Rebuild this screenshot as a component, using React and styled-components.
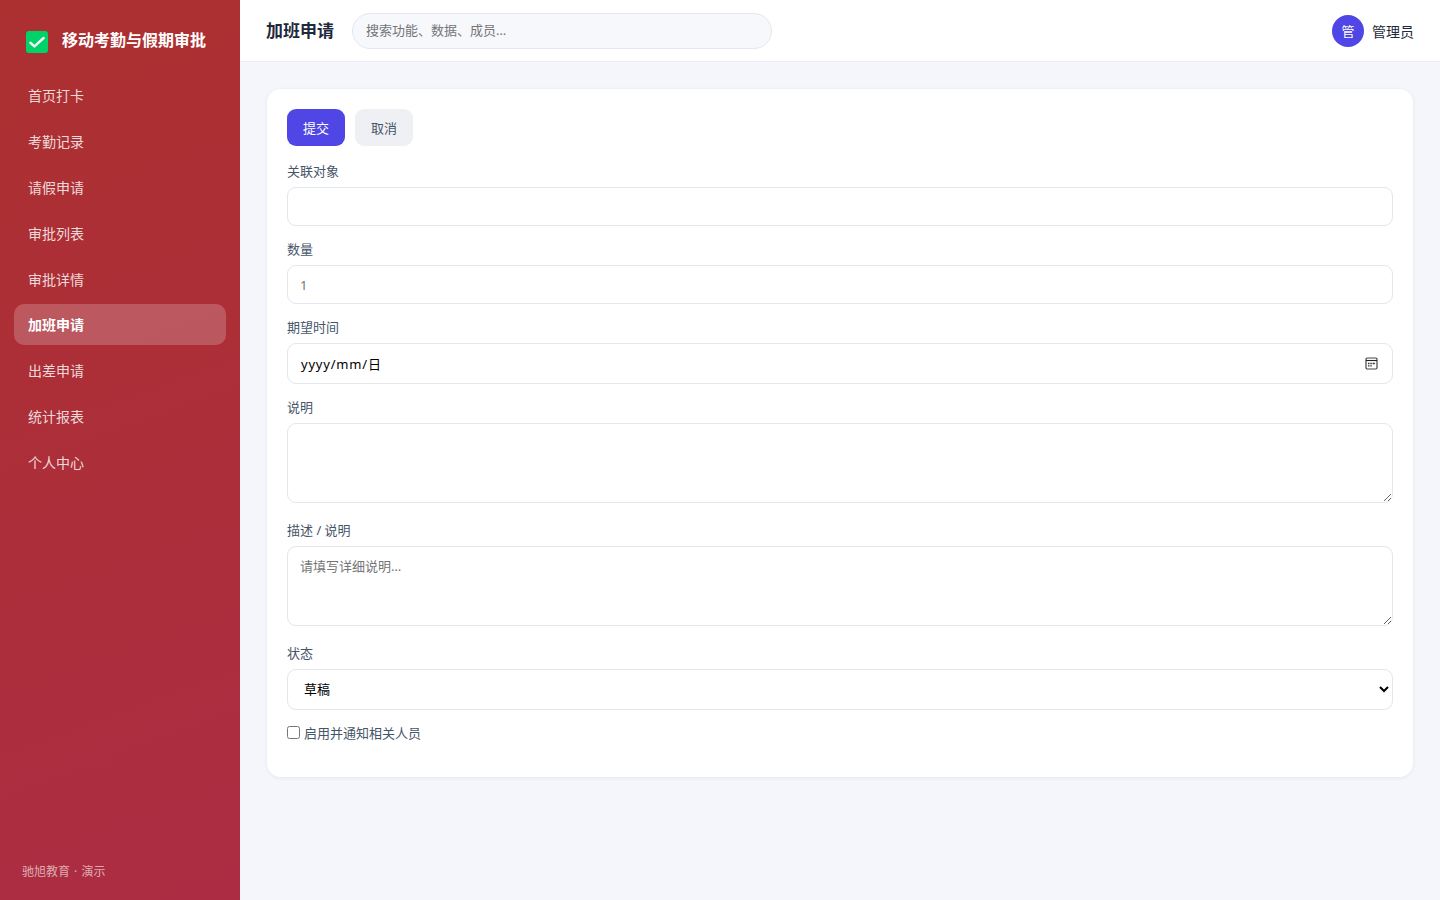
import React, { useState } from 'react'
import styled, { createGlobalStyle } from 'styled-components'

const navItems = [
  '首页打卡',
  '考勤记录',
  '请假申请',
  '审批列表',
  '审批详情',
  '加班申请',
  '出差申请',
  '统计报表',
  '个人中心',
]

export default function App() {
  const [active, setActive] = useState('加班申请')
  const [notify, setNotify] = useState(false)

  return (
    <>
      <GlobalStyle />
      <Layout>
        <Sidebar>
          <Brand>
            <svg width="22" height="22" viewBox="0 0 22 22">
              <rect width="22" height="22" rx="3" fill="#00d26a" />
              <path d="M4.4 11.8 8.4 15.4 17.6 7" fill="none" stroke="#f4f4f4" strokeWidth="2.5" strokeLinecap="round" strokeLinejoin="round" />
            </svg>
            <span>移动考勤与假期审批</span>
          </Brand>
          <Nav>
            {navItems.map((item) => (
              <NavItem key={item} $active={item === active} onClick={() => setActive(item)}>
                {item}
              </NavItem>
            ))}
          </Nav>
          <SideFooter>驰旭教育 · 演示</SideFooter>
        </Sidebar>
        <Main>
          <Topbar>
            <h1>加班申请</h1>
            <Search placeholder="搜索功能、数据、成员…" />
            <User>
              <Avatar>管</Avatar>
              <span>管理员</span>
            </User>
          </Topbar>
          <Card>
            <Actions>
              <Button $primary>提交</Button>
              <Button>取消</Button>
            </Actions>
            <Field>
              <label>关联对象</label>
              <Input />
            </Field>
            <Field>
              <label>数量</label>
              <Input placeholder="1" />
            </Field>
            <Field>
              <label>期望时间</label>
              <DateBox>
                <span>yyyy/mm/日</span>
                <svg width="13" height="13" viewBox="0 0 13 13">
                  <rect x="1" y="1" width="11" height="11" rx="1.2" fill="none" stroke="#444" strokeWidth="1.2" />
                  <path d="M1 3.5h11" stroke="#222" strokeWidth="1.1" />
                  <path d="M3 6.5h1.5M5.3 6.5h1.5M7.6 6.5h2.2M3 8.8h1.5M5.3 8.8h1.5" stroke="#333" strokeWidth="1.3" />
                </svg>
              </DateBox>
            </Field>
            <Field $area>
              <label>说明</label>
              <Textarea />
            </Field>
            <Field $area>
              <label>描述 / 说明</label>
              <Textarea placeholder="请填写详细说明…" />
            </Field>
            <Field>
              <label>状态</label>
              <Select defaultValue="草稿">
                <option>草稿</option>
                <option>已提交</option>
              </Select>
            </Field>
            <CheckLine>
              <input type="checkbox" checked={notify} onChange={(e) => setNotify(e.target.checked)} />
              <span>启用并通知相关人员</span>
            </CheckLine>
          </Card>
        </Main>
      </Layout>
    </>
  )
}

const GlobalStyle = createGlobalStyle`
* {
  box-sizing: border-box;
}
body {
  margin: 0;
  background: #f5f6fb;
  color: #1e293b;
  font-family: "Noto Sans", "Noto Sans CJK SC", sans-serif;
}
input, button, textarea, select {
  font-family: inherit;
}
`

const Layout = styled.div`
  display: flex;
  height: 100vh;
  overflow: hidden;
`

const Sidebar = styled.aside`
  width: 240px;
  flex-shrink: 0;
  display: flex;
  flex-direction: column;
  padding: 22px 14px 18px;
  background: linear-gradient(160deg, #ac3030, #ac2d43);
`

const Brand = styled.div`
  display: flex;
  align-items: center;
  gap: 14px;
  height: 36px;
  padding: 0 12px;
  color: #fff;
  font-size: 16px;
  font-weight: 700;
  line-height: 36px;
  white-space: nowrap;
  svg {
    margin-top: 4px;
    flex-shrink: 0;
  }
`

const Nav = styled.nav`
  display: flex;
  flex-direction: column;
  gap: 5px;
  margin-top: 17.35px;
`

const NavItem = styled.a`
  height: 40.8px;
  padding: 0 14px;
  border-radius: 10px;
  font-size: 14px;
  line-height: 41px;
  cursor: pointer;
  color: ${({ $active }) => ($active ? '#fff' : 'rgba(255, 255, 255, 0.82)')};
  font-weight: ${({ $active }) => ($active ? 700 : 400)};
  background: ${({ $active }) => ($active ? 'rgba(255, 255, 255, 0.2)' : 'transparent')};
`

const SideFooter = styled.div`
  margin-top: auto;
  padding: 0 8px;
  font-size: 12px;
  line-height: 20px;
  word-spacing: 1px;
  color: rgba(255, 255, 255, 0.6);
`

const Main = styled.main`
  flex: 1;
  min-width: 0;
`

const Topbar = styled.header`
  display: flex;
  align-items: center;
  height: 62px;
  padding: 0 26px;
  background: #fff;
  border-bottom: 1px solid #eceef4;
  h1 {
    margin: 0 18px 0 0;
    padding-top: 1px;
    font-size: 17px;
    font-weight: 700;
    line-height: 24px;
  }
`

const Search = styled.input`
  width: 420px;
  height: 36px;
  padding: 0 13px 1px;
  border: 1px solid #e5e7ef;
  border-radius: 18px;
  background: #f7f8fc;
  font-size: 13px;
  outline: none;
  &::placeholder {
    color: #757575;
  }
`

const User = styled.div`
  display: flex;
  align-items: center;
  gap: 8px;
  margin-left: auto;
  font-size: 14px;
`

const Avatar = styled.div`
  width: 32px;
  height: 32px;
  border-radius: 50%;
  background: #4f46e5;
  color: #fff;
  font-size: 13px;
  line-height: 32px;
  text-align: center;
`

const Card = styled.section`
  height: 688px;
  margin: 27px 27px 0;
  padding: 20px;
  border-radius: 14px;
  background: #fff;
  box-shadow: 0 1px 4px rgba(30, 41, 80, 0.07);
`

const Actions = styled.div`
  display: flex;
  gap: 10px;
  margin-bottom: 15px;
`

const Button = styled.button`
  height: 37px;
  padding: 0 16px 1px;
  border: none;
  border-radius: 9px;
  font-size: 13px;
  cursor: pointer;
  color: ${({ $primary }) => ($primary ? '#fff' : '#475569')};
  background: ${({ $primary }) => ($primary ? '#4f46e5' : '#eef0f4')};
`

const Field = styled.div`
  margin-bottom: ${({ $area }) => ($area ? '17px' : '13px')};
  label {
    display: block;
    margin-bottom: 6px;
    font-size: 13px;
    line-height: 20px;
    color: #475569;
  }
`

const Input = styled.input`
  display: block;
  width: 100%;
  height: 39px;
  padding: 0 12px;
  border: 1px solid #e4e6ee;
  border-radius: 9px;
  background: #fff;
  font-size: 13px;
  outline: none;
  &::placeholder {
    color: #757575;
  }
`

const DateBox = styled.div`
  display: flex;
  align-items: center;
  justify-content: space-between;
  height: 41px;
  padding: 0 14px 0 13px;
  border: 1px solid #e4e6ee;
  border-radius: 9px;
  color: #000;
  font-size: 13px;
  letter-spacing: 0.8px;
`

const Textarea = styled.textarea`
  display: block;
  width: 100%;
  height: 80px;
  padding: 10px 12px;
  border: 1px solid #e4e6ee;
  border-radius: 9px;
  background: #fff;
  font-size: 13px;
  line-height: 19px;
  resize: vertical;
  outline: none;
  &::placeholder {
    color: #757575;
  }
`

const Select = styled.select`
  display: block;
  width: 100%;
  height: 41px;
  padding: 0 0 1px 12px;
  border: 1px solid #e4e6ee;
  border-radius: 9px;
  background: #fff;
  color: #000;
  font-size: 13px;
  outline: none;
`

const CheckLine = styled.label`
  display: flex;
  align-items: center;
  gap: 4px;
  font-size: 13px;
  line-height: 20px;
  color: #475569;
  input {
    width: 13px;
    height: 13px;
    margin: 0 0 1px;
  }
`
